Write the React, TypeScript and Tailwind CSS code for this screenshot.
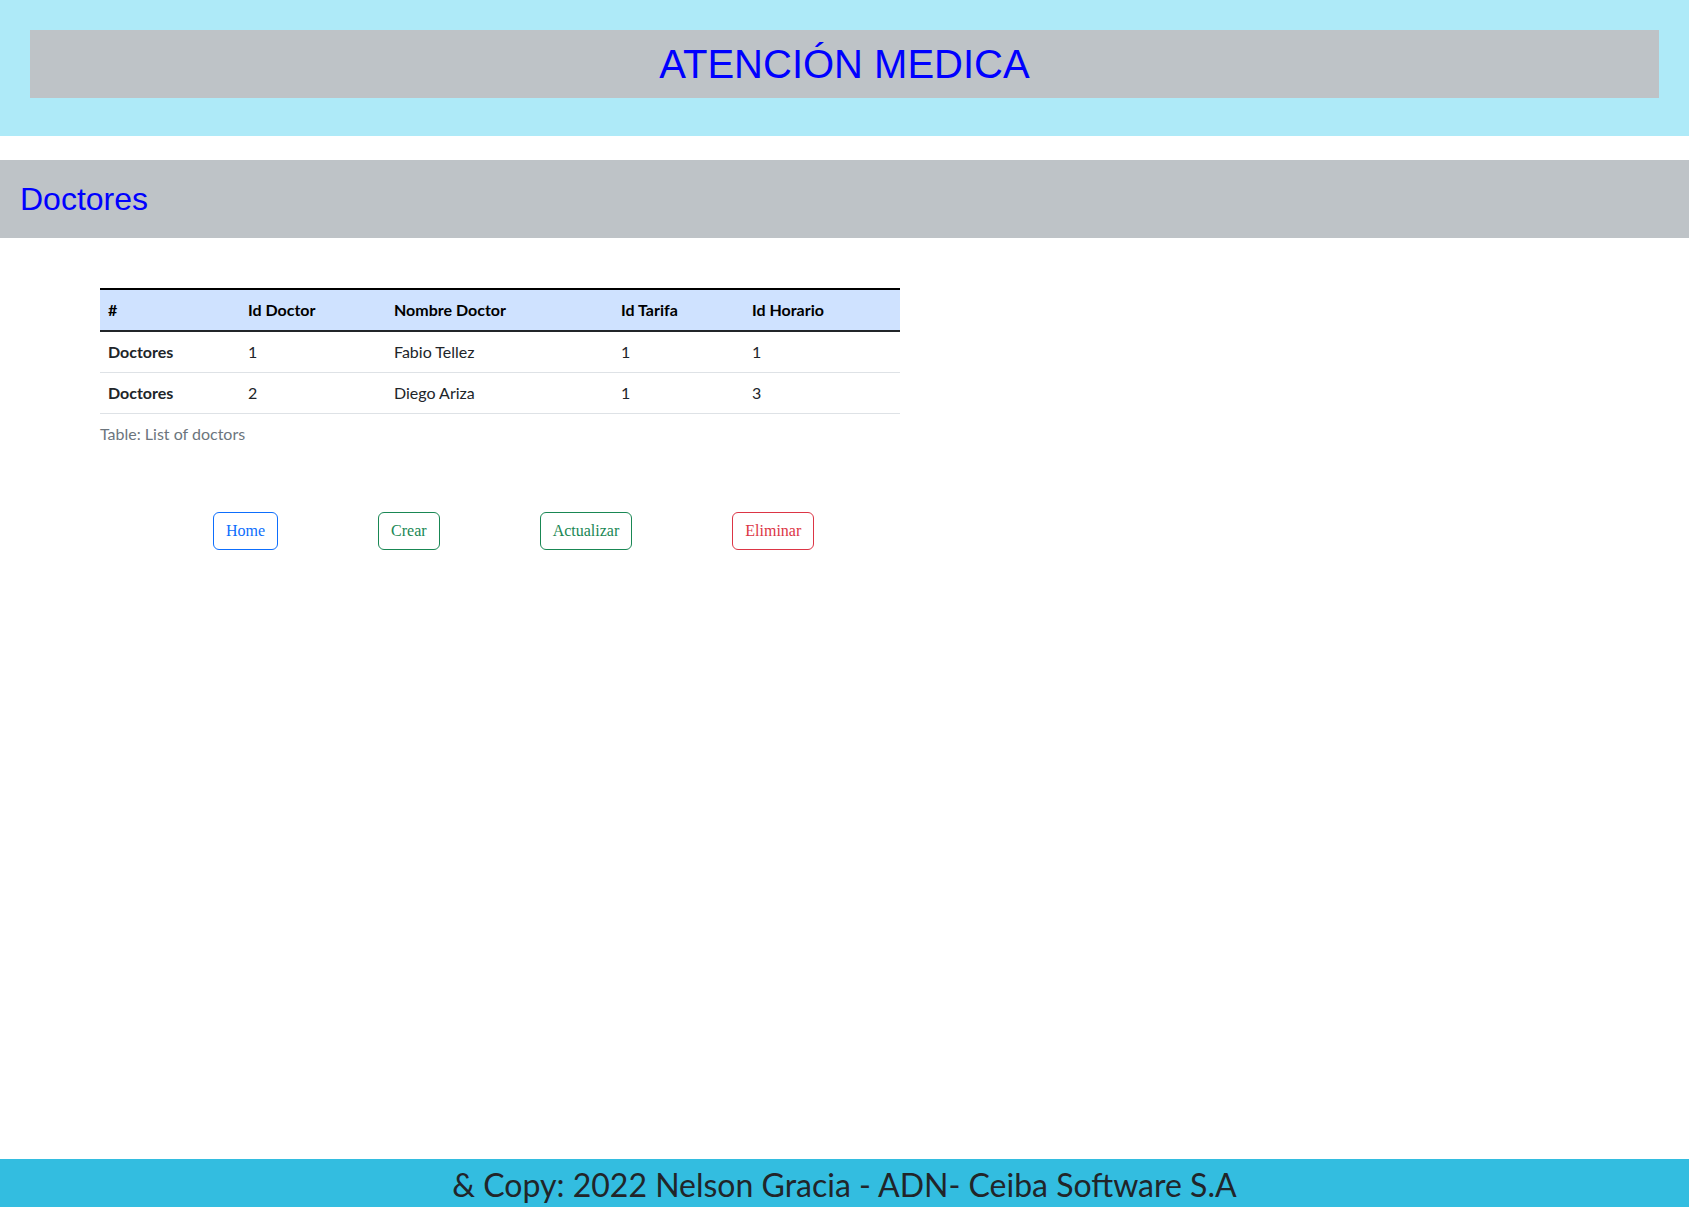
const DOCTORS = [
  { id: 1, nombre: "Fabio Tellez", tarifa: 1, horario: 1 },
  { id: 2, nombre: "Diego Ariza", tarifa: 1, horario: 3 },
];

const COLS = ["#", "Id Doctor", "Nombre Doctor", "Id Tarifa", "Id Horario"];
const COL_W = ["w-[140px]", "w-[146px]", "w-[227px]", "w-[131px]", "w-[156px]"];

function OutlineButton({ label, tone }: { label: string; tone: "blue" | "green" | "red" }) {
  const toneClass =
    tone === "blue"
      ? "border-[#0d6efd] text-[#0d6efd]"
      : tone === "green"
        ? "border-[#198754] text-[#198754]"
        : "border-[#dc3545] text-[#dc3545]";
  return (
    <button
      type="button"
      className={`rounded-[6px] border bg-white px-[12px] py-[6px] font-['Liberation_Serif',serif] text-[16px] leading-[24px] ${toneClass}`}>
      {label}
    </button>
  );
}

export default function App() {
  return (
    <div className="flex min-h-screen flex-col bg-white font-['Lato','Open_Sans',sans-serif] text-[#212529]">
      <header className="bg-[#aeeaf8] px-[30px] pt-[30px] pb-[38px]">
        <div className="flex h-[68px] items-center justify-center bg-[#bec3c7]">
          <h1 className="font-['Liberation_Sans',Arial,sans-serif] text-[40px] leading-[48px] text-[#0000ff]">
            ATENCIÓN MEDICA
          </h1>
        </div>
      </header>

      <section className="mt-[24px] flex h-[78px] items-center bg-[#bec3c7] px-[20px]">
        <h2 className="font-['Liberation_Sans',Arial,sans-serif] text-[32px] leading-[38px] text-[#0000ff]">
          Doctores
        </h2>
      </section>

      <main className="px-[100px] pt-[50px]">
        <table className="w-[800px] table-fixed border-collapse text-left text-[16px] leading-[24px]">
          <thead>
            <tr className="border-t-2 border-b-2 border-t-black border-b-[#212529] bg-[#cfe2ff] text-black">
              {COLS.map((c, i) => (
                <th key={c} className={`${COL_W[i]} p-[8px] font-bold`}>
                  {c}
                </th>
              ))}
            </tr>
          </thead>
          <tbody>
            {DOCTORS.map((d) => (
              <tr key={d.id} className="border-b border-[#dee2e6]">
                <th className="p-[8px] font-bold">Doctores</th>
                <td className="p-[8px]">{d.id}</td>
                <td className="p-[8px]">{d.nombre}</td>
                <td className="p-[8px]">{d.tarifa}</td>
                <td className="p-[8px]">{d.horario}</td>
              </tr>
            ))}
          </tbody>
        </table>
        <p className="py-[8px] text-[16px] leading-[24px] text-[#6c757d]">Table: List of doctors</p>

        <div className="mt-[58px] flex gap-[100px] pl-[113px]">
          <OutlineButton label="Home" tone="blue" />
          <OutlineButton label="Crear" tone="green" />
          <OutlineButton label="Actualizar" tone="green" />
          <OutlineButton label="Eliminar" tone="red" />
        </div>
      </main>

      <footer className="mt-auto flex h-[48px] items-center justify-center bg-[#33bde0] pt-[3px]">
        <p className="text-[32px] leading-[45px] text-[#212529]">& Copy: 2022 Nelson Gracia - ADN- Ceiba Software S.A</p>
      </footer>
    </div>
  );
}
